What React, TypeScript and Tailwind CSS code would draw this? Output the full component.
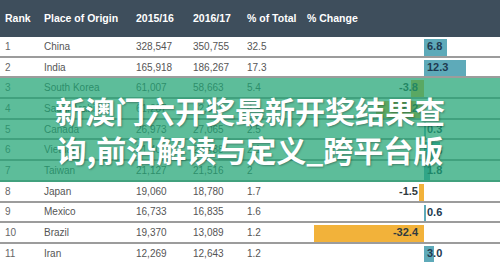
type Row = {
  rank: number;
  place: string;
  y1: string;
  y2: string;
  share: string;
  change: number;
  label: string;
};

const rows: Row[] = [
  { rank: 1, place: "China", y1: "328,547", y2: "350,755", share: "32.5", change: 6.8, label: "6.8" },
  { rank: 2, place: "India", y1: "165,918", y2: "186,267", share: "17.3", change: 12.3, label: "12.3" },
  { rank: 3, place: "South Korea", y1: "61,007", y2: "58,663", share: "5.4", change: -3.8, label: "-3.8" },
  { rank: 4, place: "Saudi Arabia", y1: "61,287", y2: "52,611", share: "4.9", change: -14.2, label: "-14.2" },
  { rank: 5, place: "Canada", y1: "26,973", y2: "27,065", share: "2.5", change: 0.3, label: "0.3" },
  { rank: 6, place: "Vietnam", y1: "21,403", y2: "22,438", share: "2.1", change: 4.8, label: "4.8" },
  { rank: 7, place: "Taiwan", y1: "21,127", y2: "21,516", share: "2", change: 1.8, label: "1.8" },
  { rank: 8, place: "Japan", y1: "19,060", y2: "18,780", share: "1.7", change: -1.5, label: "-1.5" },
  { rank: 9, place: "Mexico", y1: "16,733", y2: "16,835", share: "1.6", change: 0.6, label: "0.6" },
  { rank: 10, place: "Brazil", y1: "19,370", y2: "13,089", share: "1.2", change: -32.4, label: "-32.4" },
  { rank: 11, place: "Iran", y1: "12,269", y2: "12,643", share: "1.2", change: 3.0, label: "3.0" },
];

const SCALE = 3.4;
const cols = "grid grid-cols-[44px_92px_57px_54px_60px_1fr]";

const ChangeCell = ({ value, label }: { value: number; label: string }) => (
  <div className="flex h-full">
    <div className="relative flex h-full w-[117px] items-center justify-end">
      {value < 0 && (
        <>
          <div
            className="absolute right-0 top-[2px] bottom-0 bg-[#f2b23a]"
            style={{ width: Math.max(1, -value * SCALE) }}
          />
          <span className="relative pr-[6px] text-[11px] font-bold text-[#2f3a40]">{label}</span>
        </>
      )}
    </div>
    <div className="relative flex h-full flex-1 items-center">
      {value >= 0 && (
        <>
          <div
            className="absolute left-0 top-[2px] bottom-0 bg-[#5eaab9]"
            style={{ width: Math.max(1.5, value * SCALE) }}
          />
          <span className="relative pl-[3px] text-[11px] font-bold text-[#1e3a50]">{label}</span>
        </>
      )}
    </div>
  </div>
);

export default function App() {
  return (
    <div className="relative h-[262px] w-[500px] overflow-hidden bg-white font-['Liberation_Sans',Arial,sans-serif]">
      <div className={`${cols} h-[37px] items-center bg-[#3e4e5c] text-[10.5px] font-bold text-white`}>
        <span className="pl-[5px]">Rank</span>
        <span>Place of Origin</span>
        <span>2015/16</span>
        <span>2016/17</span>
        <span>% of Total</span>
        <span>% Change</span>
      </div>

      {rows.map((r) => (
        <div
          key={r.rank}
          className={`${cols} h-[20.7px] items-center border-b-2 border-[#9c9c9c] text-[10px] text-[#555]`}
        >
          <span className="pl-[5px] text-[#666]">{r.rank}</span>
          <span>{r.place}</span>
          <span>{r.y1}</span>
          <span>{r.y2}</span>
          <span>{r.share}</span>
          <ChangeCell value={r.change} label={r.label} />
        </div>
      ))}

      {/* green banner over rows 3-7 */}
      <div className="absolute left-0 right-0 top-[78.4px] flex h-[103.5px] flex-col items-center justify-center bg-[rgba(30,163,115,0.72)]">
        <p className="text-center font-['Noto_Sans_CJK_SC',sans-serif] text-[30px] font-bold leading-[39px] text-white [text-shadow:1px_1px_2px_rgba(0,0,0,0.3)]">
          新澳门六开奖最新开奖结果查
          <br />
          询,前沿解读与定义_跨平台版
        </p>
      </div>
    </div>
  );
}
